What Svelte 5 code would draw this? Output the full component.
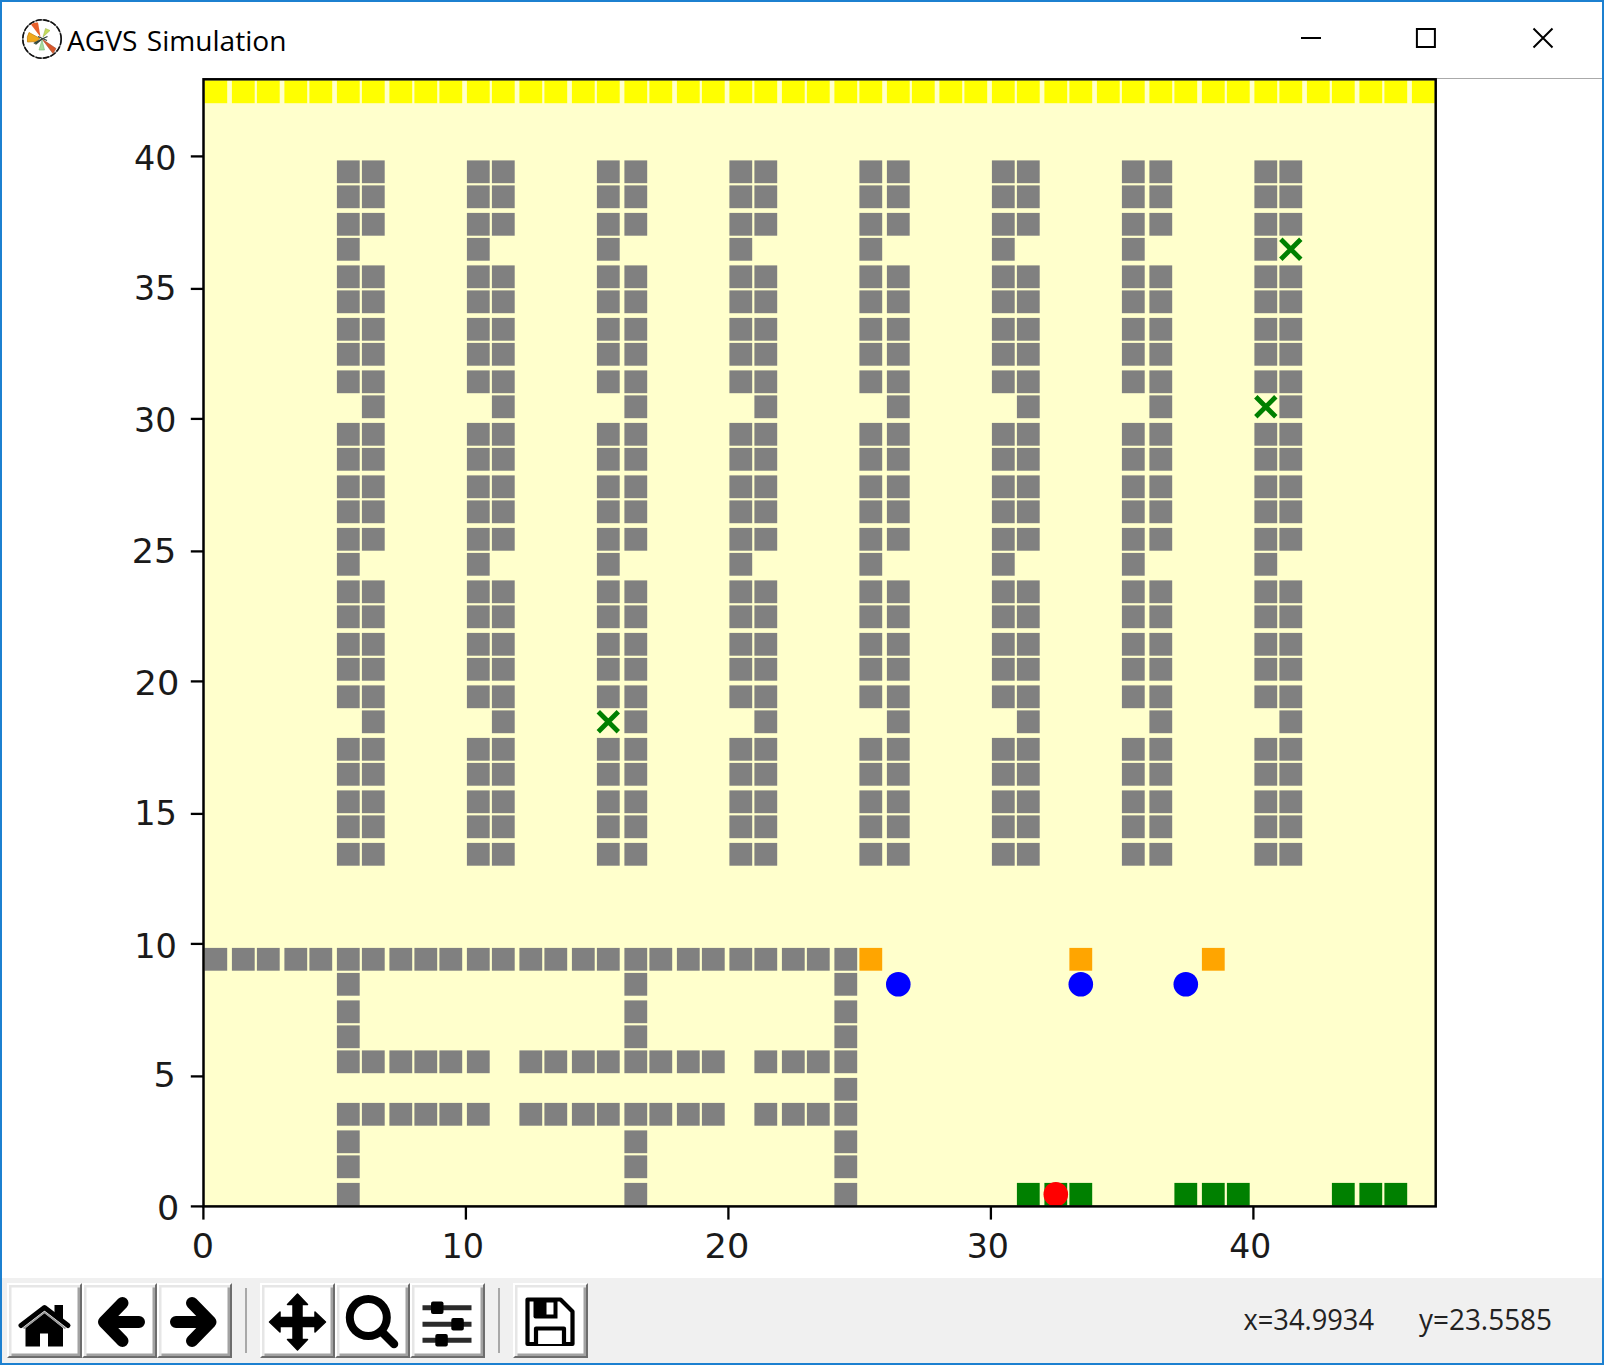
<script>
  // Grid coordinates are snapped to whole canvas dots; one dot is 2.5px on screen.
  const DOT = 2.5;
  const PITCH = 10.489;
  const cx = (i) => 243.3 + DOT * Math.round(PITCH * (i - 1) - 0.42);
  const cy = (j) => 1194.3 - DOT * Math.round(PITCH * j + 0.07);
  const tick = (v) => DOT * Math.round(PITCH * v);

  const range = (a, b) => Array.from({ length: b - a + 1 }, (_, k) => a + k);
  const cells = [];
  const add = (x, y, kind) => cells.push({ x, y, kind });

  // Storage racks
  for (const c of [5, 10, 15, 20, 25, 30, 35, 40]) {
    for (const r of range(13, 39)) {
      if (r !== 30 && r !== 18) add(c, r, 'wall');
      if (r !== 36 && r !== 24) add(c + 1, r, 'wall');
    }
  }

  // Office walls
  for (const c of range(0, 24)) add(c, 9, 'wall');
  for (const c of [5, 16, 24]) for (const r of [0, 1, 2, 6, 7, 8]) add(c, r, 'wall');
  for (const c of [...range(5, 10), ...range(12, 19), ...range(21, 24)]) {
    add(c, 5, 'wall');
    add(c, 3, 'wall');
  }
  add(24, 4, 'wall');

  for (const c of range(0, 46)) add(c, 42, 'belt');
  for (const c of [25, 33, 38]) add(c, 9, 'station');
  for (const c of [31, 32, 33, 37, 38, 39, 43, 44, 45]) add(c, 0, 'dock');

  const robots = [[26, 8, 'blue'], [33, 8, 'blue'], [37, 8, 'blue'], [32, 0, 'red']];
  const goals = [[41, 36], [40, 30], [15, 18]];

  // value, x, text width, baseline
  const yLabels = [
    [0, 157, 22.3, 1219.5], [5, 153.5, 22.3, 1087.3], [10, 134.2, 42.8, 957.8],
    [15, 134.2, 42.8, 825.3], [20, 134.5, 44.8, 695.2], [25, 131.8, 44.5, 562.6],
    [30, 134.1, 42.2, 432.3], [35, 134.1, 42.2, 300.3], [40, 134, 42.6, 169.8]
  ];
  const xLabels = [[0, 191.7, 22.3], [10, 441.5, 42.5], [20, 704.5, 44.8], [30, 966.7, 42.3], [40, 1229.3, 42]];
  const groups = [['home', 'back', 'forward'], ['pan', 'zoom', 'adjust'], ['save']];
</script>

<div class="window">
  <header>
    <svg class="logo" width="40" height="40" viewBox="0 0 40 40">
      <circle cx="20" cy="20" r="19.2" fill="#fff" stroke="#666" stroke-width="1.2" />
      <circle cx="20" cy="20" r="19.2" fill="none" stroke="#111" stroke-width="1.6" stroke-dasharray="6 1.6" />
      <path d="M18.500 18 9 5.500Q12 3 16 3.500Z" fill="#e8602c" />
      <path d="M18 19.500 14 22.500 5.500 23Q4.500 18 7 13.500Z" fill="#f0a81c" stroke="#c98612" stroke-width=".8" />
      <path d="M21 18 23.500 9.500 28 11.500Z" fill="#c5dc5a" stroke="#9db84a" stroke-width=".6" />
      <path d="M20 20 34 29.500 31 34.500Z" fill="#d9572b" stroke="#9c4a2c" stroke-width=".6" />
      <path d="M20 21 17 31H22.500Z" fill="#a9dd9c" stroke="#77b877" stroke-width=".6" />
      <path d="M20 20 12.500 24 14 25ZM20 20 25.500 17.500M16 17.500 25 21.500" fill="#4fa57c" stroke="#33443a" stroke-width="1.3" />
    </svg>
    <svg class="title" width="230" height="76"><text x="0" y="49.300" textLength="219.500" lengthAdjust="spacingAndGlyphs">AGVS Simulation</text></svg>
    <svg class="controls" width="254" height="76" viewBox="0 0 254 76">
      <path d="M0 36H20M115.9 27H133.9V45H115.9Z" />
      <path d="M232.5 26.5 251.5 45.5M251.5 26.5 232.5 45.5" />
    </svg>
  </header>

  <svg class="plot" width="1600" height="1200" viewBox="2 78 1600 1200">
    <defs><clipPath id="axes"><rect x="203.3" y="79.3" width="1232.4" height="1127" /></clipPath></defs>
    <path class="edge" d="M1437 78.5H1602" />
    <rect class="floor" x="203.3" y="79.3" width="1232.4" height="1127" />
    <g clip-path="url(#axes)">
      {#each cells as c}
        <rect class={c.kind} x={cx(c.x) - 11.4} y={cy(c.y) - 11.4} width="22.8" height="22.8" />
      {/each}
      {#each goals as [x, y]}
        <path class="goal" transform="translate({cx(x)} {cy(y)})" d="M-10-10 10 10M10-10-10 10" />
      {/each}
      {#each robots as [x, y, color]}
        <circle class={color} cx={cx(x)} cy={cy(y)} r="12.3" />
      {/each}
    </g>
    <rect class="frame" x="203.5" y="79.3" width="1232.2" height="1127.1" />
    {#each yLabels as [v, x, len, y]}
      <path class="tick" d="M203.3 {1206.4 - tick(v)}H190.8" />
      <text class="label" {x} {y} textLength={len} lengthAdjust="spacingAndGlyphs">{v}</text>
    {/each}
    {#each xLabels as [v, x, len]}
      <path class="tick" d="M{203.4 + tick(v)} 1206.4V1219.6" />
      <text class="label" {x} y="1257.5" textLength={len} lengthAdjust="spacingAndGlyphs">{v}</text>
    {/each}
  </svg>

  <footer>
    {#each groups as group, g}
      {#if g > 0}<span class="divider"></span>{/if}
      <div class="group">
        {#each group as name}
          <button aria-label={name}>
            <svg width="65" height="65" viewBox="0 0 65 65">
              {#if name === 'home'}
                <path d="M13.500 40 32.500 25 51 40V58.500H36V45.500H28V58.500H13.500Z" />
                <path d="M42.500 17H51V32L42.500 26Z" />
                <path d="M9 37.500 32.500 19.500 56 37.500" fill="none" stroke="#000" stroke-width="5" stroke-linecap="round" stroke-linejoin="round" />
                <path d="M11.500 40.500 32.500 24.300 53.500 40.500" fill="none" stroke="#999" stroke-width="1.600" />
              {:else if name === 'back'}
                <path d="M35.500 15 17 34 35.500 53M19 34H52" class="arrow" />
              {:else if name === 'forward'}
                <path d="M30 15 48.500 34 30 53M47 34H14" class="arrow" />
              {:else if name === 'pan'}
                <path d="M32.500 6 42.500 16.500H37V29.500H50V24L60.500 34 50 44V38.500H37V51.500H42.500L32.500 62 22.500 51.500H28V38.500H15V44L4.500 34 15 24V29.500H28V16.500H22.500Z" stroke="#000" stroke-width="1.500" stroke-linejoin="round" />
              {:else if name === 'zoom'}
                <circle cx="28.300" cy="29.500" r="18.500" fill="none" stroke="#000" stroke-width="8" />
                <path d="M43 45 54 56" stroke="#000" stroke-width="8.500" stroke-linecap="round" />
              {:else if name === 'adjust'}
                <path d="M7.500 19.700H56.500M7.500 36.300H56.500M7.500 52.300H56.500" stroke="#2a2a2a" stroke-width="5" />
                <rect x="16" y="13.500" width="12.500" height="12.500" rx="2" />
                <rect x="36.300" y="30" width="12.500" height="12.500" rx="2" />
                <rect x="20.300" y="46" width="12.500" height="12.500" rx="2" />
              {:else}
                <path d="M9.500 11.500H42.500L54.500 23.500V56H9.500Z" fill="#fff" stroke="#000" stroke-width="4.200" stroke-linejoin="round" />
                <path d="M15.500 11H39.500V30.500H17.500Q15.500 30.500 15.500 28.500Z" />
                <path d="M28.500 14.500H35.500V26.500H28.500Z" fill="#fff" />
                <path d="M18 56V40.500H46V56" fill="#fff" stroke="#000" stroke-width="4.200" stroke-linejoin="round" />
              {/if}
            </svg>
          </button>
        {/each}
      </div>
    {/each}
    <svg class="status" width="320" height="85">
      <text x="2.500" y="52.300" textLength="130.500" lengthAdjust="spacingAndGlyphs">x=34.9934</text>
      <text x="178" y="52.300" textLength="133" lengthAdjust="spacingAndGlyphs">y=23.5585</text>
    </svg>
  </footer>
</div>

<style>
  :global(body) { margin: 0; background: #fff; }
  .window {
    box-sizing: border-box;
    width: 1604px;
    height: 1365px;
    border: 2px solid #1c80d0;
    display: flex;
    flex-direction: column;
    background: #fff;
    overflow: hidden;
  }
  svg { display: block; flex: none; }
  header { height: 76px; display: flex; align-items: flex-start; }
  .logo { margin: 17px 5px 0 20px; }
  .title { font: 28px "Open Sans", "Noto Sans", sans-serif; word-spacing: 2px; }
  .controls { margin-left: auto; margin-right: 47px; fill: none; stroke: #000; stroke-width: 2; }
  .plot { font-family: "DejaVu Sans", sans-serif; }
  .edge { stroke: #aaa; }
  .floor { fill: #ffffcc; }
  .wall { fill: #808080; }
  .belt { fill: #ffff00; }
  .station { fill: #ffa500; }
  .dock { fill: #008000; }
  .blue { fill: #0000ff; }
  .red { fill: #ff0000; }
  .goal { fill: none; stroke: #008000; stroke-width: 4.8; }
  .frame { fill: none; stroke: #000; stroke-width: 2.5; }
  .tick { stroke: #000; stroke-width: 2.3; }
  .label { font-size: 34px; fill: #1a1a1a; }
  footer {
    height: 85px;
    box-sizing: border-box;
    background: #f0f0f0;
    display: flex;
    align-items: center;
    padding-left: 5px;
  }
  .group { display: flex; }
  button {
    box-sizing: border-box;
    width: 75px;
    height: 75px;
    padding: 0;
    background: #fff;
    border: 2.5px solid;
    border-color: #fff #6d6d6d #6d6d6d #fff;
    box-shadow: inset 2.5px 2.5px #e6e6e6, inset -2.5px -2.5px #a2a2a2;
    display: flex;
    align-items: center;
    justify-content: center;
  }
  .arrow { fill: none; stroke: #000; stroke-width: 12; stroke-linecap: round; stroke-linejoin: round; }
  .divider { width: 2px; height: 65px; margin: 0 13px; background: #a8a8a8; }
  .status { margin-left: auto; margin-right: 41px; font: 30px "Open Sans", "Noto Sans", sans-serif; fill: #222; }
</style>
